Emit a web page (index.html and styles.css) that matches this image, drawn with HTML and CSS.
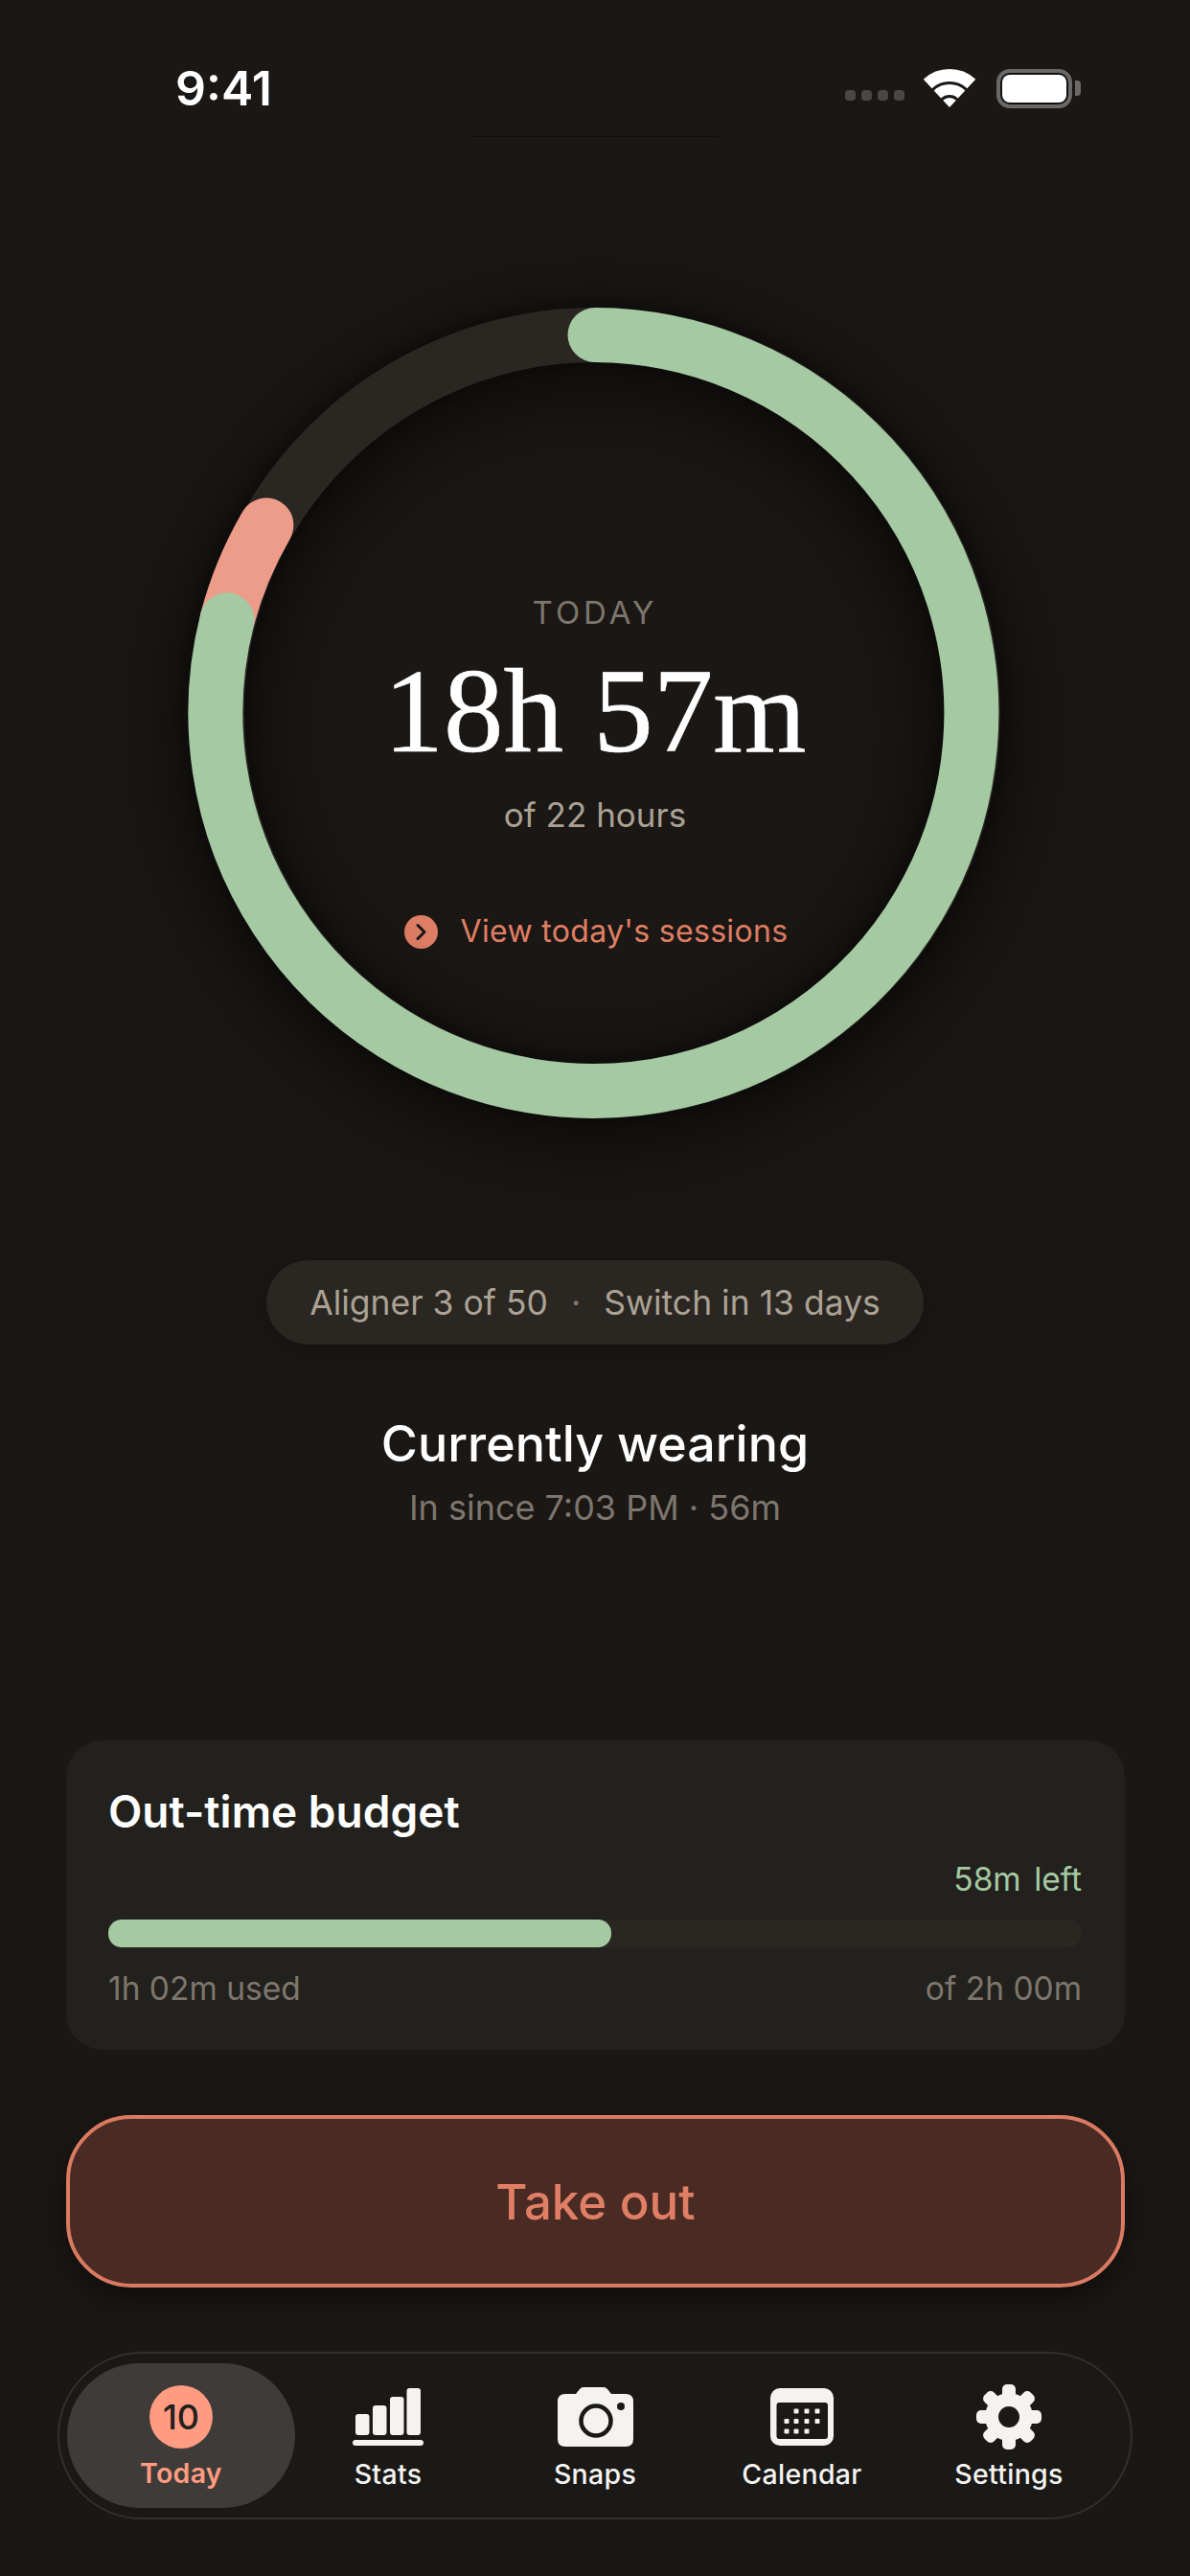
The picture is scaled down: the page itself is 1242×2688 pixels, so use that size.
FILE: index.html
```html
<!DOCTYPE html>
<html lang="en">
<head>
  <meta charset="UTF-8">
  <meta name="viewport" content="width=device-width, initial-scale=1.0">
  <title>Today</title>
  <link rel="stylesheet" href="styles.css">
</head>
<body>
  <div class="screen">
    <div class="status-bar">
      <div class="time">9:41</div>
      <div class="status-icons">
        <div class="signal"><span></span><span></span><span></span><span></span></div>
        <svg class="wifi" viewBox="0 0 55 40">
          <path d="M4.2 15.5A33.5 33.5 0 0 1 49.8 15.5" fill="none" stroke="#fff" stroke-width="13"/>
          <path d="M14.4 26.5A18.5 18.5 0 0 1 39.6 26.5" fill="none" stroke="#fff" stroke-width="11"/>
          <path d="M27 40L20.2 32.7A10 10 0 0 1 33.8 32.7Z" fill="#fff"/>
        </svg>
        <div class="battery"><div class="battery-level"></div></div>
        <div class="battery-cap"></div>
      </div>
    </div>
    <div class="island-line"></div>

    <div class="ring">
      <svg class="ring-chart" viewBox="0 0 846 846">
        <circle cx="423" cy="423" r="394.5" fill="none" stroke="#2a2622" stroke-width="57"/>
        <path d="M80 227A394.5 394.5 0 0 0 39 326" fill="none" stroke="#ec9c89" stroke-width="57" stroke-linecap="round"/>
        <path d="M423 28.5A394.5 394.5 0 1 1 39 326" fill="none" stroke="#a5c9a2" stroke-width="57" stroke-linecap="round"/>
      </svg>
      <div class="ring-text">
        <div class="ring-label">TODAY</div>
        <div class="ring-value">18h 57m</div>
        <div class="ring-goal">of 22 hours</div>
        <div class="ring-link">
          <svg class="link-icon" viewBox="0 0 35 35">
            <circle cx="17.5" cy="17.5" r="17.5" fill="#e07f65"/>
            <path d="M14 10.5L21 17.5L14 24.5" fill="none" stroke="#1a1714" stroke-width="3" stroke-linecap="round" stroke-linejoin="round"/>
          </svg>
          <span>View today's sessions</span>
        </div>
      </div>
    </div>

    <div class="aligner-pill">
      <span>Aligner 3 of 50</span>
      <span class="pill-dot">·</span>
      <span>Switch in 13 days</span>
    </div>

    <div class="wearing-title">Currently wearing</div>
    <div class="wearing-sub">In since 7:03 PM · 56m</div>

    <div class="budget-card">
      <div class="budget-title">Out-time budget</div>
      <div class="budget-left">58m left</div>
      <div class="budget-track"><div class="budget-fill" style="width: 51.7%"></div></div>
      <div class="budget-labels">
        <span>1h 02m used</span>
        <span>of 2h 00m</span>
      </div>
    </div>

    <div class="take-out">Take out</div>

    <div class="tab-bar">
      <div class="tab tab-active">
        <div class="today-badge">10</div>
        <div class="tab-label">Today</div>
      </div>
      <div class="tab">
        <svg class="tab-icon" width="74" height="60" viewBox="0 0 74 60">
          <rect x="3" y="27" width="14.5" height="22" rx="3"/>
          <rect x="21" y="18" width="14.5" height="31" rx="3"/>
          <rect x="39" y="9" width="14.5" height="40" rx="3"/>
          <rect x="56.5" y="0" width="14.5" height="49" rx="3"/>
          <rect x="0" y="54" width="74" height="6" rx="3"/>
        </svg>
        <div class="tab-label">Stats</div>
      </div>
      <div class="tab">
        <svg class="tab-icon" width="79" height="62" viewBox="0 0 79 62">
          <path d="M8 7H19L23 2Q24.500 0 27 0H48Q50.500 0 52 2L56 7H71Q79 7 79 15V54Q79 62 71 62H8Q0 62 0 54V15Q0 7 8 7Z"/>
          <circle cx="40" cy="35" r="15.500" fill="none" stroke="#1a1917" stroke-width="4.500"/>
          <circle cx="66" cy="20" r="4" fill="#1a1917"/>
        </svg>
        <div class="tab-label">Snaps</div>
      </div>
      <div class="tab">
        <svg class="tab-icon" width="66" height="60" viewBox="0 0 66 60">
          <rect width="66" height="60" rx="10"/>
          <rect x="6.500" y="15" width="53.500" height="38" rx="3" fill="#1a1917"/>
          <g>
            <rect x="24.500" y="21.500" width="5" height="5" rx="1"/>
            <rect x="35.500" y="21.500" width="5" height="5" rx="1"/>
            <rect x="46.500" y="21.500" width="5" height="5" rx="1"/>
            <rect x="14.500" y="32" width="5" height="5" rx="1"/>
            <rect x="24.500" y="32" width="5" height="5" rx="1"/>
            <rect x="35.500" y="32" width="5" height="5" rx="1"/>
            <rect x="46.500" y="32" width="5" height="5" rx="1"/>
            <rect x="14.500" y="42.500" width="5" height="5" rx="1"/>
            <rect x="24.500" y="42.500" width="5" height="5" rx="1"/>
            <rect x="35.500" y="42.500" width="5" height="5" rx="1"/>
          </g>
        </svg>
        <div class="tab-label">Calendar</div>
      </div>
      <div class="tab">
        <svg class="tab-icon" width="68" height="68" viewBox="0 0 68 68">
          <circle cx="34" cy="34" r="25"/>
          <rect x="27" y="0" width="14" height="68" rx="5"/>
          <rect x="27" y="0" width="14" height="68" rx="5" transform="rotate(45 34 34)"/>
          <rect x="27" y="0" width="14" height="68" rx="5" transform="rotate(90 34 34)"/>
          <rect x="27" y="0" width="14" height="68" rx="5" transform="rotate(135 34 34)"/>
          <circle cx="34" cy="34" r="11" fill="#1a1917"/>
        </svg>
        <div class="tab-label">Settings</div>
      </div>
    </div>
  </div>
</body>
</html>
```

FILE: styles.css
```css
* {
  margin: 0;
  padding: 0;
  box-sizing: border-box;
}

body {
  background: #1a1714;
  font-family: Inter, "Liberation Sans", sans-serif;
  color: #fff;
}

.screen {
  width: 1242px;
  height: 2688px;
  overflow: hidden;
}

/* status bar */
.status-bar {
  display: flex;
  justify-content: space-between;
  align-items: center;
  height: 52px;
  margin-top: 66px;
  padding: 0 114px 0 183px;
}

.time {
  font-size: 50px;
  line-height: 52px;
  font-weight: 600;
}

.status-icons {
  display: flex;
  align-items: center;
}

.signal {
  display: flex;
  gap: 6px;
  align-self: flex-end;
  margin-right: 20px;
  margin-bottom: 8px;
}

.signal span {
  width: 11px;
  height: 11px;
  border-radius: 4px;
  background: #4a4845;
}

.wifi {
  width: 55px;
  height: 40px;
  margin-right: 21px;
}

.battery {
  width: 79px;
  height: 41px;
  padding: 2px;
  border: 4px solid #6b6866;
  border-radius: 14px;
  background: #111;
}

.battery-level {
  height: 100%;
  border-radius: 8px;
  background: #fff;
}

.battery-cap {
  width: 6px;
  height: 16px;
  margin-left: 3px;
  border-radius: 0 4px 4px 0;
  background: #6b6866;
}

.island-line {
  width: 258px;
  height: 1px;
  margin: 24px 0 0 492px;
  background: #100e0c;
}

/* ring */
.ring {
  display: grid;
  width: 846px;
  height: 846px;
  margin: 178px 0 0 198px;
}

.ring-chart {
  grid-area: 1 / 1;
  width: 846px;
  height: 846px;
  overflow: visible;
  filter: drop-shadow(0 0 10px rgba(0, 0, 0, 0.45)) drop-shadow(0 16px 44px rgba(0, 0, 0, 0.7));
}

.ring-text {
  grid-area: 1 / 1;
  display: flex;
  flex-direction: column;
  align-items: center;
  padding-top: 298px;
}

.ring-label {
  font-size: 33px;
  line-height: 40px;
  letter-spacing: 0.12em;
  color: #7d766e;
}

.ring-value {
  margin-top: 18px;
  font-family: "Liberation Serif", serif;
  font-size: 125px;
  line-height: 130px;
  white-space: nowrap;
  -webkit-text-stroke: 0.6px #fff;
}

.ring-goal {
  margin-top: 21px;
  font-size: 35px;
  line-height: 44px;
  color: #aaa294;
}

.ring-link {
  display: flex;
  align-items: center;
  gap: 24px;
  margin-top: 78px;
  margin-left: 2px;
  font-size: 32px;
  line-height: 44px;
  letter-spacing: 0.01em;
  color: #e07f65;
}

.link-icon {
  width: 35px;
  height: 35px;
}

/* aligner */
.aligner-pill {
  display: flex;
  justify-content: center;
  align-items: center;
  gap: 24px;
  width: 686px;
  height: 88px;
  margin: 148px 0 0 278px;
  border-radius: 44px;
  background: #2a2622;
  box-shadow: 0 4px 24px rgba(0, 0, 0, 0.25);
  font-size: 35.5px;
  color: #aaa294;
}

.pill-dot {
  color: #7d766e;
}

.wearing-title {
  margin-top: 72px;
  font-size: 52px;
  line-height: 64px;
  font-weight: 500;
  text-align: center;
}

.wearing-sub {
  margin-top: 12px;
  font-size: 36px;
  line-height: 44px;
  text-align: center;
  color: #7d766e;
}

/* budget card */
.budget-card {
  width: 1105px;
  height: 323px;
  margin: 221px 0 0 69px;
  padding: 48px 45px 0 44px;
  border-radius: 38px;
  background: #22211d;
}

.budget-title {
  font-size: 46px;
  line-height: 52px;
  font-weight: 600;
}

.budget-left {
  margin-top: 25px;
  font-size: 33.5px;
  line-height: 40px;
  text-align: right;
  word-spacing: 4px;
  color: #a5c9a2;
}

.budget-track {
  height: 29px;
  margin-top: 22px;
  border-radius: 14px;
  background: #2a2622;
}

.budget-fill {
  height: 100%;
  border-radius: 14px;
  background: #a5c9a2;
}

.budget-labels {
  display: flex;
  justify-content: space-between;
  margin-top: 23px;
  font-size: 33.5px;
  line-height: 40px;
  color: #7d766e;
}

/* take out */
.take-out {
  display: flex;
  justify-content: center;
  align-items: center;
  width: 1105px;
  height: 180px;
  margin: 68px 0 0 69px;
  border: 4px solid #d97b62;
  border-radius: 68px;
  background: #4a2b23;
  box-shadow: 0 12px 30px rgba(0, 0, 0, 0.4);
  font-size: 51px;
  font-weight: 500;
  color: #e07f65;
}

/* tab bar */
.tab-bar {
  display: grid;
  grid-template-columns: repeat(5, 216px);
  width: 1122px;
  height: 175px;
  margin: 67px 0 0 60px;
  padding: 10px 19px;
  border: 2px solid #33302c;
  border-radius: 88px;
  background: #1a1917;
}

.tab {
  display: flex;
  flex-direction: column;
  align-items: center;
}

.tab-active {
  margin: 0 -11px;
  border-radius: 76px;
  background: #3e3b38;
}

.tab-icon {
  flex: none;
  height: 68px;
  margin-top: 22px;
  fill: #f4f3f1;
}

.today-badge {
  display: flex;
  justify-content: center;
  align-items: center;
  width: 66px;
  height: 66px;
  margin-top: 23px;
  border-radius: 50%;
  background: #ff9c82;
  font-size: 36px;
  font-weight: 500;
  color: #23201d;
}

.tab-label {
  margin-top: 8px;
  font-size: 28.5px;
  line-height: 36px;
  font-weight: 500;
  letter-spacing: 0.01em;
  color: #f4f3f1;
}

.tab-active .tab-label {
  font-weight: 600;
  color: #ff9c82;
}
```
